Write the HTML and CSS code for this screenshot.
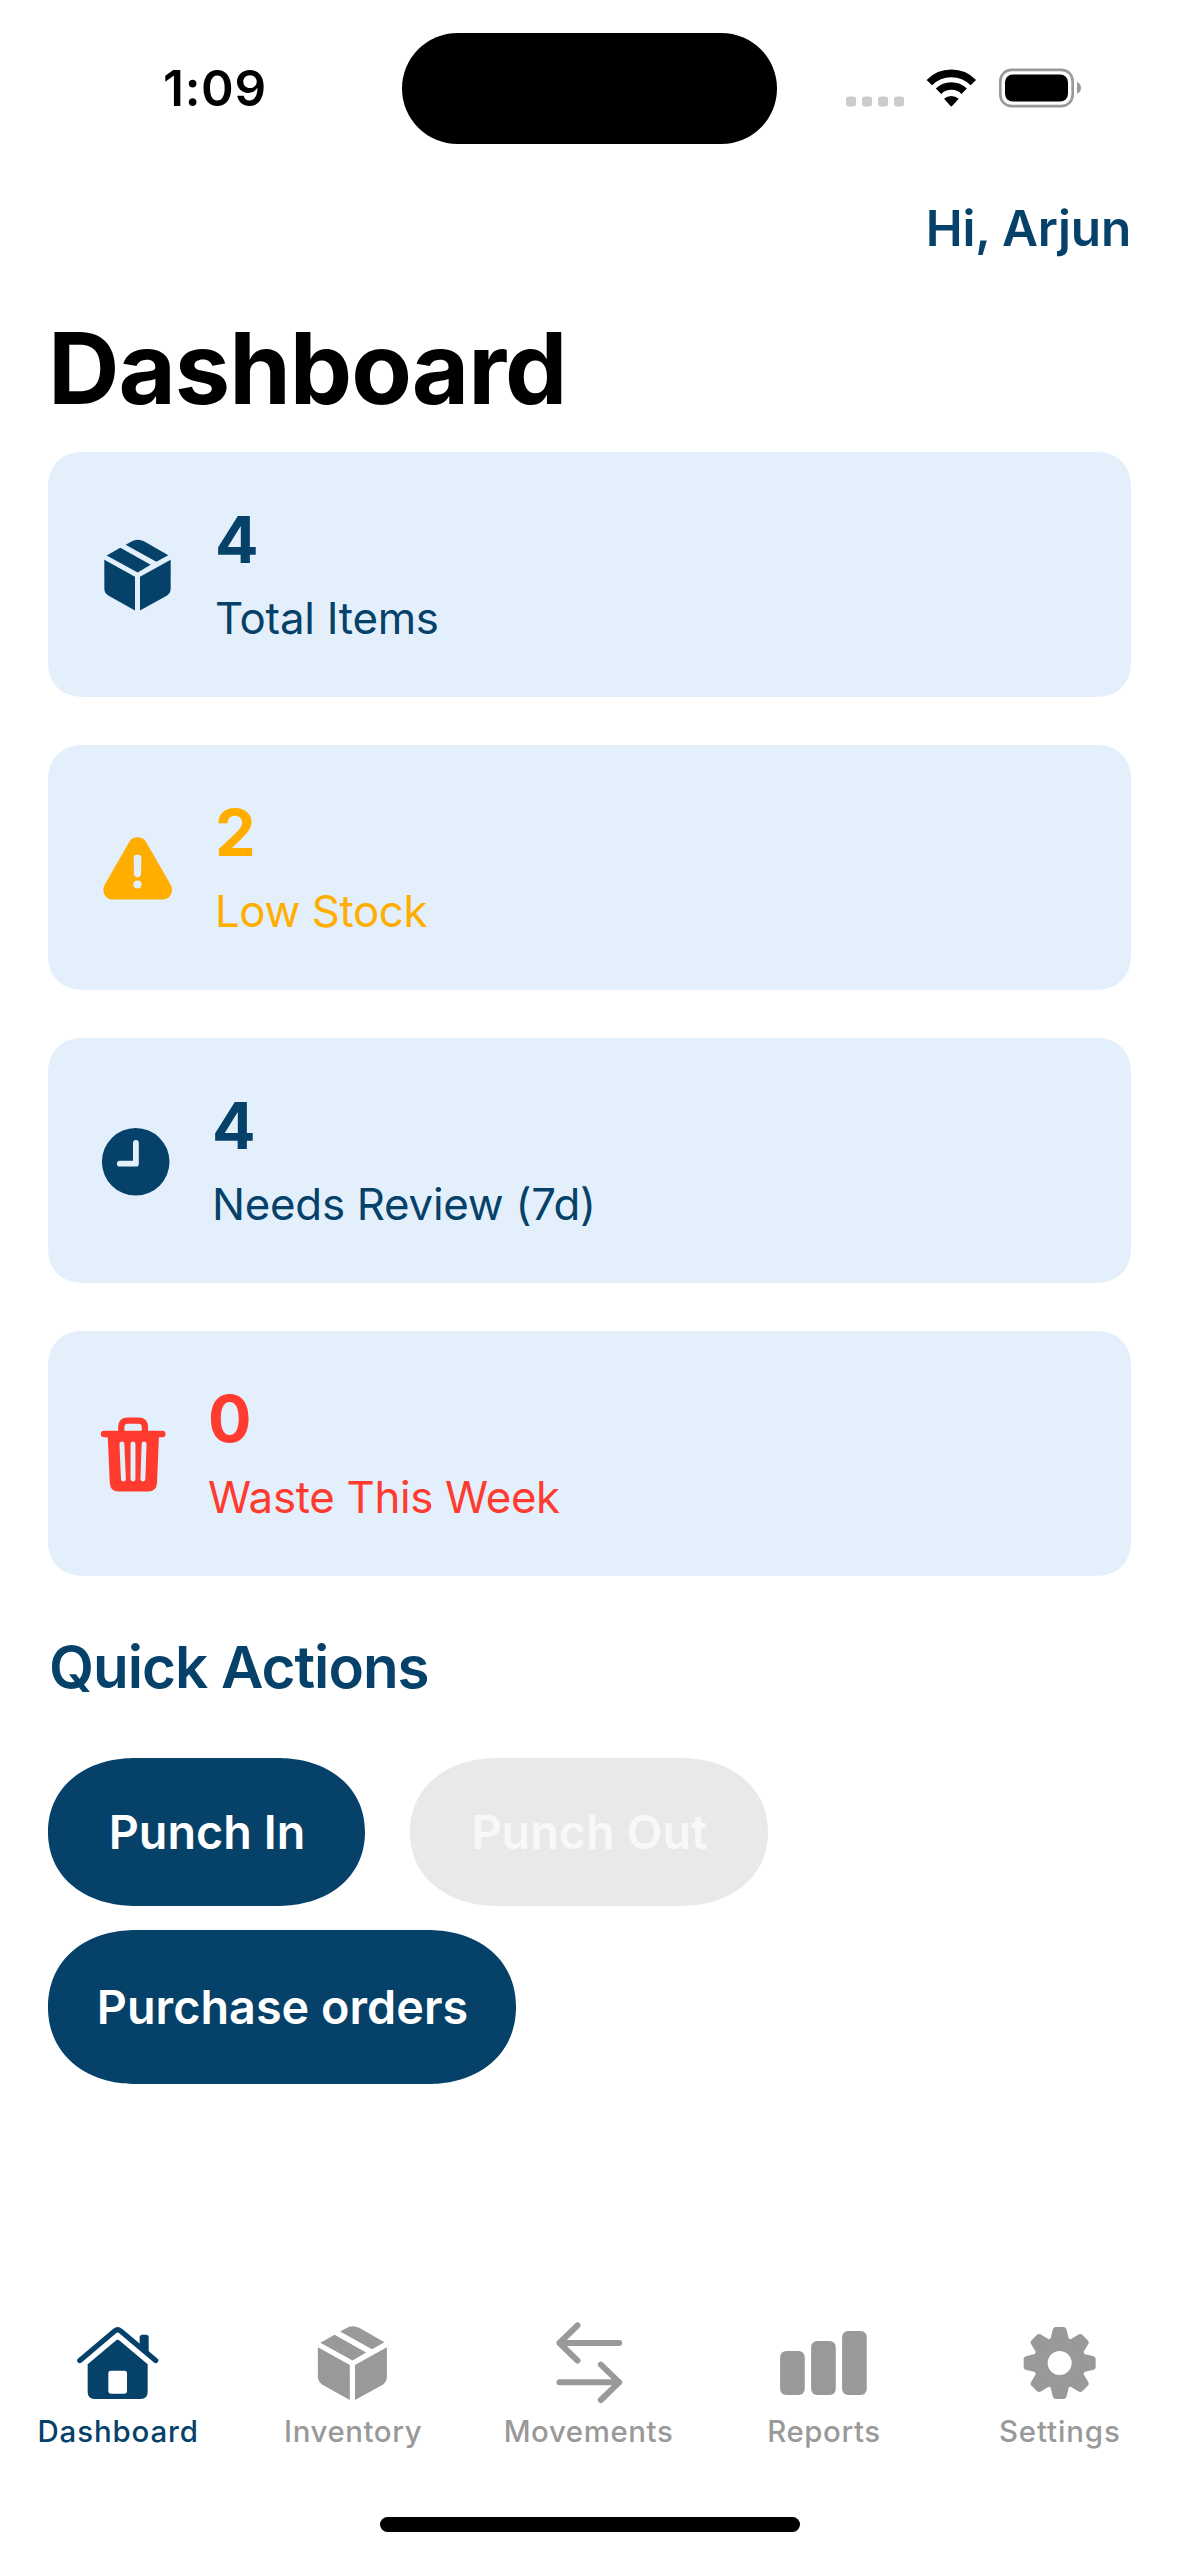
FILE: index.html
```html
<!DOCTYPE html>
<html lang="en">
<head>
<meta charset="utf-8">
<title>Dashboard</title>
<link rel="stylesheet" href="styles.css">
</head>
<body>
<div class="screen">
  <header class="status-bar">
    <div class="status-left"><span class="time">1:09</span></div>
    <div class="island"></div>
    <div class="status-right">
      <svg class="status-icons" viewBox="78 49.5 708 132">
        <g fill="#cbcbcb">
          <rect x="78" y="138" width="30" height="30" rx="9"/>
          <rect x="126" y="138" width="30" height="30" rx="9"/>
          <rect x="174" y="138" width="30" height="30" rx="9"/>
          <rect x="222" y="138" width="30" height="30" rx="9"/>
        </g>
        <g fill="none" stroke="#000" stroke-width="23">
          <path d="M328 96.2A92.5 92.5 0 0 1 460 96.2"/>
          <path d="M355.5 122.5A54.5 54.5 0 0 1 432.5 122.5"/>
        </g>
        <path d="M372 145A32 32 0 0 1 416 145L397 166Q394 169 391 166Z"/>
        <rect x="541" y="58" width="217" height="109" rx="34" fill="none" stroke="#999" stroke-width="8"/>
        <rect x="555" y="72" width="189" height="81" rx="23"/>
        <path fill="#999" d="M771 94Q783 100 783 112Q783 124 771 130Z"/>
      </svg>
    </div>
  </header>

  <main class="content">
    <div class="greeting">Hi, Arjun</div>
    <h1 class="title">Dashboard</h1>

    <section class="cards">
      <article class="card">
        <svg class="card-icon icon-wide" viewBox="167 268.5 249 270" fill="currentColor">
          <g id="box">
            <path d="M256 313L272 304Q291 292 311 302L384 344L348 364Z"/>
            <path d="M240 322L331 373L292 396L199 345Z"/>
            <path d="M192 358L284 409V510L205 466Q192 458 192 444Z"/>
            <path d="M299 409L391 358V444Q391 458 379 466L299 510Z"/>
          </g>
        </svg>
        <div class="card-text">
          <div class="value">4</div>
          <div class="label">Total Items</div>
        </div>
      </article>
      <article class="card warning">
        <svg class="card-icon icon-wide" viewBox="167 247.5 249 270">
          <path fill="currentColor" d="M268 302Q276 290 291.5 290Q307 290 316 302L391 433Q398 446 393 459Q387 476 368 477H215Q197 476 191 460Q186 446 193 433Z"/>
          <path class="cutout" d="M289 343H294Q303 343 303 352L302 401Q301 410 291.5 410Q282 410 281 401L280 352Q280 343 289 343Z"/>
          <circle class="cutout" cx="291.5" cy="432" r="12.3"/>
        </svg>
        <div class="card-text">
          <div class="value">2</div>
          <div class="label tight">Low Stock</div>
        </div>
      </article>
      <article class="card">
        <svg class="card-icon icon-medium" viewBox="0 0 80 90">
          <circle cx="39.7" cy="45.8" r="33.8" fill="currentColor"/>
          <path class="cutout-line" stroke-width="5.8" d="M39.9 26.8V47.7H23.8"/>
        </svg>
        <div class="card-text">
          <div class="value">4</div>
          <div class="label">Needs Review (7d)</div>
        </div>
      </article>
      <article class="card danger">
        <svg class="card-icon icon-narrow" viewBox="0 0 76 90">
          <rect x="4.8" y="21.8" width="64.7" height="6.4" rx="3.2" fill="currentColor"/>
          <path fill="none" stroke="currentColor" stroke-width="6.3" d="M25.3 25V18Q25.3 11.6 31.7 11.6H42.5Q48.9 11.6 48.9 18V25"/>
          <path fill="currentColor" d="M11.7 26H63L61 74Q60.6 82.5 52 82.5H22.5Q14.2 82.5 13.8 74Z"/>
          <path class="cutout-line" stroke-width="4.9" d="M25.9 35L27.4 70M37 35V70M48.1 35L46.9 70"/>
        </svg>
        <div class="card-text">
          <div class="value">0</div>
          <div class="label snug">Waste This Week</div>
        </div>
      </article>
    </section>

    <h2 class="section-title">Quick Actions</h2>
    <div class="actions">
      <button class="button punch-in">Punch In</button>
      <button class="button punch-out" disabled>Punch Out</button>
      <button class="button orders">Purchase orders</button>
    </div>
  </main>

  <nav class="tab-bar">
    <a class="tab active">
      <svg class="tab-icon" viewBox="153 30 282 318">
        <path fill="none" stroke="currentColor" stroke-width="16" stroke-linecap="round" d="M179.500 181.500L284 93Q293 86 302 93L407 181.500"/>
        <path fill="currentColor" d="M359 134V112Q359 104 367 104H378Q386 104 386 112V158Z"/>
        <path fill="currentColor" d="M286 123Q293 116 300 123L383 193V276Q383 297 362 297H224Q203 297 203 276V193Z"/>
        <rect x="265" y="212" width="56" height="69" rx="7" fill="#fff"/>
      </svg>
      <span class="tab-label">Dashboard</span>
    </a>
    <a class="tab">
      <svg class="tab-icon" viewBox="858.3 30 282 318" fill="currentColor">
        <use href="#box" transform="translate(694.3 -231.5) scale(1.04 1.042)"/>
      </svg>
      <span class="tab-label compact">Inventory</span>
    </a>
    <a class="tab">
      <svg class="tab-icon" viewBox="185.5 30 282 318">
        <path fill="none" stroke="currentColor" stroke-width="18" stroke-linecap="round" stroke-linejoin="round" d="M292 76L238 129L292 182M238 129H417M362 194L417 247L362 300M417 247H238"/>
      </svg>
      <span class="tab-label compact">Movements</span>
    </a>
    <a class="tab">
      <svg class="tab-icon" viewBox="110.7 30 282 318" fill="currentColor">
        <rect x="120" y="153" width="74" height="132" rx="18"/>
        <rect x="213" y="123" width="74" height="162" rx="18"/>
        <rect x="306" y="93" width="74" height="192" rx="18"/>
      </svg>
      <span class="tab-label compact">Reports</span>
    </a>
    <a class="tab">
      <svg class="tab-icon" viewBox="817 30 282 318">
        <g transform="translate(960 189)" fill="currentColor">
          <circle r="57.500" fill="none" stroke="currentColor" stroke-width="43"/>
          <g id="teeth">
            <path id="tooth" d="M-27 -74L-21 -99Q-19 -108 -11 -108H11Q19 -108 21 -99L27 -74Z"/>
            <use href="#tooth" transform="rotate(45)"/>
            <use href="#tooth" transform="rotate(90)"/>
            <use href="#tooth" transform="rotate(135)"/>
          </g>
          <use href="#teeth" transform="rotate(180)"/>
        </g>
      </svg>
      <span class="tab-label">Settings</span>
    </a>
  </nav>
  <footer class="home-area"><div class="home-indicator"></div></footer>
</div>
</body>
</html>
```
FILE: styles.css
```css
:root {
  --navy: #054169;
  --card: #e3f0fc;
  --orange: #ffae00;
  --red: #ff3a2f;
  --grey: #999;
}

* { box-sizing: border-box; }

body {
  margin: 0;
  background: #fff;
  color: #000;
  font-family: Inter, "Liberation Sans", sans-serif;
}

.screen {
  display: flex;
  flex-direction: column;
  width: 1179px;
  height: 2556px;
}

svg { display: block; flex: none; }

/* Status bar */
.status-bar {
  display: flex;
  align-items: center;
  height: 177px;
}
.status-left { width: 402px; padding: 0 0 2px 163px; }
.time {
  font-size: 49.5px;
  font-weight: 600;
  line-height: 60px;
  letter-spacing: 0.7px;
}
.island {
  align-self: flex-start;
  width: 375px;
  height: 111px;
  margin-top: 33px;
  border-radius: 56px;
  background: #000;
}
.status-right { padding-left: 69px; }
.status-icons { width: 236px; height: 44px; }

/* Page content */
.content { flex: 1; padding: 0 48px; }
.greeting {
  color: var(--navy);
  font-size: 49.5px;
  font-weight: 600;
  line-height: 102px;
  letter-spacing: -0.2px;
  text-align: right;
}
.title {
  margin: 29px 0 24px;
  font-size: 99px;
  font-weight: 700;
  line-height: 120px;
  letter-spacing: -1.05px;
}

.cards { display: flex; flex-direction: column; gap: 48px; }
.card {
  display: flex;
  align-items: center;
  gap: 36px;
  height: 245px;
  padding: 42px 48px;
  border-radius: 35px;
  corner-shape: superellipse(1.15);
  background: var(--card);
  color: var(--navy);
}
.warning { color: var(--orange); }
.danger { color: var(--red); }
.card-icon { height: 90px; }
.icon-wide { width: 83px; }
.icon-medium { width: 80px; }
.icon-narrow { width: 76px; }
.cutout { fill: var(--card); }
.cutout-line {
  fill: none;
  stroke: var(--card);
  stroke-linecap: round;
  stroke-linejoin: round;
}
.card-text { padding-top: 2px; }
.value { font-size: 64.5px; font-weight: 700; line-height: 87px; }
.label { font-size: 43.8px; line-height: 70px; letter-spacing: -0.25px; }
.label.tight { letter-spacing: -0.4px; }
.label.snug { letter-spacing: -0.32px; }

.section-title {
  margin: 55px 0 55px 1px;
  color: var(--navy);
  font-size: 58.3px;
  font-weight: 600;
  line-height: 72px;
  letter-spacing: -0.98px;
}

.actions { display: flex; flex-wrap: wrap; gap: 24px 45px; }
.button {
  height: 148px;
  padding: 0 0 0 1px;
  border: 0;
  border-radius: 88px / 50%;
  corner-shape: superellipse(1.1);
  background: var(--navy);
  color: #fff;
  font: 600 46.7px Inter, "Liberation Sans", sans-serif;
  letter-spacing: 0.05px;
}
.punch-in { width: 317px; }
.punch-out { width: 358px; background: #e9e9eb; color: #f8f8f9; }
.orders { width: 468px; height: 154px; }

/* Tab bar */
.tab-bar { display: flex; padding-right: 2px; }
.tab {
  display: flex;
  flex: 1 1 0;
  flex-direction: column;
  align-items: center;
  color: var(--grey);
}
.tab.active { color: var(--navy); }
.tab-icon { width: 94px; height: 106px; }
.tab-label {
  padding-left: 1px;
  font-size: 29.4px;
  font-weight: 500;
  line-height: 31px;
  letter-spacing: 0.9px;
}
.tab-label.compact { padding-left: 0; letter-spacing: 0.6px; }

.home-area { display: flex; justify-content: center; padding: 70px 0 24px; }
.home-indicator { width: 420px; height: 15px; border-radius: 8px; background: #000; }
```
